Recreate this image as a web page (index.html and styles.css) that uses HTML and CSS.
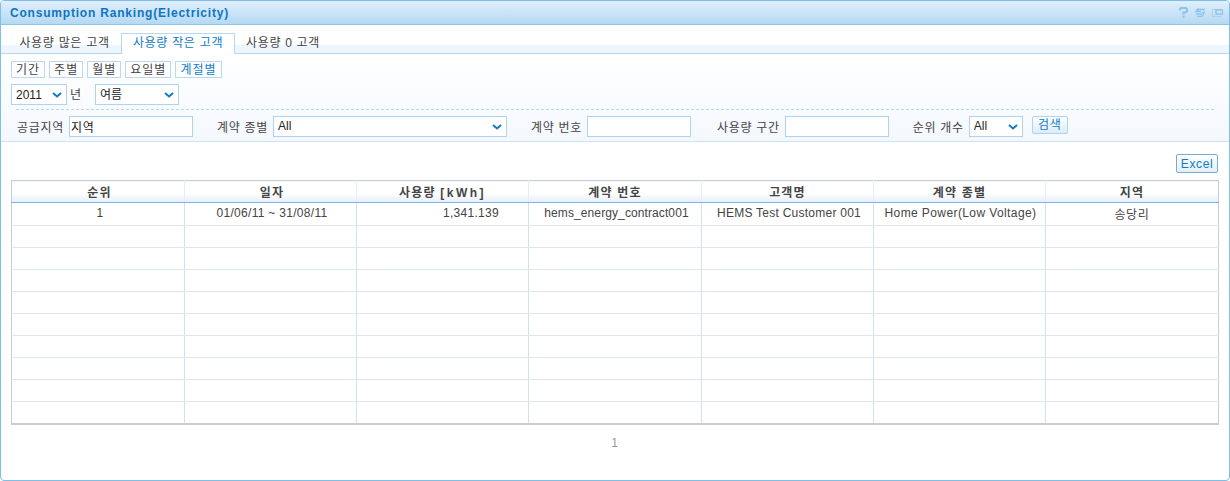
FILE: index.html
```html
<!DOCTYPE html>
<html lang="ko">
<head>
  <meta charset="UTF-8">
  <title>Consumption Ranking(Electricity)</title>
  <link rel="stylesheet" href="styles.css">
</head>
<body>
  <div class="panel">
    <div class="panel-head">
      <h1>Consumption Ranking(Electricity)</h1>
      <div class="head-icons">
        <svg width="9" height="11" viewBox="0 0 9 11"><path d="M1 3.500V1.500L2 1h5l1 1v2.500L6 5.500H4.500v2M4.500 8.500V11" fill="none" stroke="#8cc4ec" stroke-width="2"/></svg>
        <svg width="10" height="9" viewBox="0 0 10 9"><path d="M10 1.500H4L1 3.500h5M3.500 0L1 3M1 6h6M2 8.500h5L9 5.500M7 4.500h3" fill="none" stroke="#8cc4ec" stroke-width="1.300"/></svg>
        <svg width="11" height="8" viewBox="0 0 11 8"><rect x="4" y="1" width="6.500" height="4" fill="#cfe6f8" stroke="#8cc4ec" stroke-width="1.500"/><path d="M.5 .5h10M.5 .5v7M.5 7.500h10" fill="none" stroke="#8cc4ec" stroke-dasharray="1 1"/></svg>
      </div>
    </div>

    <div class="tabs">
      <a class="tab">사용량 많은 고객</a>
      <a class="tab active">사용량 작은 고객</a>
      <a class="tab">사용량 0 고객</a>
    </div>

    <div class="filters">
      <div class="periods">
        <button class="period">기간</button>
        <button class="period">주별</button>
        <button class="period">월별</button>
        <button class="period">요일별</button>
        <button class="period on">계절별</button>
      </div>
      <div class="date-row">
        <span class="sel sel-year">
          <select><option>2011</option></select>
          <svg class="arrow" width="10" height="6" viewBox="0 0 10 6"><path d="M1 1l4 3.500L9 1" fill="none" stroke="#0f7cc4" stroke-width="2"/></svg>
        </span>
        <span class="year-label">년</span>
        <span class="sel sel-season">
          <select><option>여름</option></select>
          <svg class="arrow" width="10" height="6" viewBox="0 0 10 6"><path d="M1 1l4 3.500L9 1" fill="none" stroke="#0f7cc4" stroke-width="2"/></svg>
        </span>
      </div>
      <div class="search-row">
        <label class="lbl-area">공급지역</label>
        <input class="txt txt-area" type="text" value="지역">
        <label class="lbl-type">계약 종별</label>
        <span class="sel sel-type">
          <select><option>All</option></select>
          <svg class="arrow" width="10" height="6" viewBox="0 0 10 6"><path d="M1 1l4 3.500L9 1" fill="none" stroke="#0f7cc4" stroke-width="2"/></svg>
        </span>
        <label class="lbl-no">계약 번호</label>
        <input class="txt txt-no" type="text">
        <label class="lbl-use">사용량 구간</label>
        <input class="txt txt-no" type="text">
        <label class="lbl-rank">순위 개수</label>
        <span class="sel sel-rank">
          <select><option>All</option></select>
          <svg class="arrow" width="10" height="6" viewBox="0 0 10 6"><path d="M1 1l4 3.500L9 1" fill="none" stroke="#0f7cc4" stroke-width="2"/></svg>
        </span>
        <button class="btn-search">검색</button>
      </div>
    </div>

    <div class="content">
      <div class="tools"><button class="btn-excel">Excel</button></div>
      <table class="grid">
        <thead>
          <tr><th>순위</th><th>일자</th><th>사용량 <span class="unit">[kWh]</span></th><th>계약 번호</th><th>고객명</th><th>계약 종별</th><th>지역</th></tr>
        </thead>
        <tbody>
          <tr><td class="rank">1</td><td class="date">01/06/11 ~ 31/08/11</td><td class="num">1,341.139</td><td class="contract">hems_energy_contract001</td><td class="customer">HEMS Test Customer 001</td><td class="kind">Home Power(Low Voltage)</td><td class="area">송당리</td></tr>
          <tr><td></td><td></td><td></td><td></td><td></td><td></td><td></td></tr>
          <tr><td></td><td></td><td></td><td></td><td></td><td></td><td></td></tr>
          <tr><td></td><td></td><td></td><td></td><td></td><td></td><td></td></tr>
          <tr><td></td><td></td><td></td><td></td><td></td><td></td><td></td></tr>
          <tr><td></td><td></td><td></td><td></td><td></td><td></td><td></td></tr>
          <tr><td></td><td></td><td></td><td></td><td></td><td></td><td></td></tr>
          <tr><td></td><td></td><td></td><td></td><td></td><td></td><td></td></tr>
          <tr><td></td><td></td><td></td><td></td><td></td><td></td><td></td></tr>
          <tr><td></td><td></td><td></td><td></td><td></td><td></td><td></td></tr>
        </tbody>
      </table>
      <div class="pager">1</div>
    </div>
  </div>
</body>
</html>
```

FILE: styles.css
```css
* { box-sizing: border-box; }
html, body { margin: 0; height: 100%; }
body {
  background: #fff;
  color: #444;
  font-family: "Liberation Sans", "Noto Sans CJK KR", sans-serif;
  font-size: 12px;
  letter-spacing: 0.7px;
  overflow: hidden;
}
button, input, select { font: inherit; letter-spacing: inherit; margin: 0; }

.panel {
  height: 481px;
  border: 1px solid #7cc0ea;
  border-radius: 4px;
  overflow: hidden;
}
.panel-head {
  height: 24px;
  padding: 0 6px 0 9px;
  display: flex;
  align-items: center;
  justify-content: space-between;
  background: linear-gradient(#e0effc, #b5d9f3);
  border-bottom: 1px solid #8cc4ec;
}
.panel-head h1 {
  margin: 0;
  font-size: 12px;
  font-weight: bold;
  letter-spacing: 0.8px;
  color: #0f74c4;
}
.head-icons { display: flex; align-items: center; gap: 7px; }

.tabs {
  height: 29px;
  padding: 8px 0 0 7px;
  display: flex;
  background: linear-gradient(#fff 20px, #edf5fe 20px);
  border-bottom: 1px solid #b9d7ef;
}
.tab {
  width: 113px;
  height: 20px;
  line-height: 20px;
  text-align: center;
  color: #444;
}
.tab:last-child { width: 96px; }
.tab.active {
  width: 114px;
  height: 21px;
  color: #0f7cc4;
  background: #fff;
  border: 1px solid #b9d7ef;
  border-bottom: 0;
  line-height: 19px;
}

.filters {
  height: 88px;
  padding: 7px 10px 0;
  background: linear-gradient(#fff, #f4f8fe);
  border-bottom: 1px solid #cde2f5;
}
.periods { display: flex; gap: 4px; }
.period {
  height: 17px;
  padding: 0 4px;
  background: #fff;
  border: 1px solid #bcd8f0;
  color: #444;
  line-height: 14px;
  letter-spacing: 1px;
}
.period.on { color: #0f7cc4; }

.date-row { display: flex; align-items: center; margin-top: 6px; height: 21px; }
.year-label { width: 28px; padding-left: 3px; margin-top: -3px; }

.sel { position: relative; display: inline-block; height: 21px; }
.sel select {
  width: 100%;
  height: 100%;
  padding: 0 0 0 4px;
  appearance: none;
  border: 1px solid #afd2ee;
  border-radius: 0;
  background: #fff;
  color: #222;
  letter-spacing: 0;
}
.sel .arrow { position: absolute; top: 8px; right: 5px; pointer-events: none; }
.sel-year { width: 56px; }
.sel-season { width: 84px; }
.sel-type { width: 234px; }
.sel-rank { width: 54px; }

.search-row {
  display: flex;
  align-items: center;
  height: 27px;
  margin: 4px 5px 0 5px;
  padding-top: 6px;
  border-top: 1px dashed #b5d8f2;
}
.search-row label { white-space: nowrap; }
.lbl-area { padding-left: 1px; }
.txt {
  height: 21px;
  padding: 0 1px;
  border: 1px solid #afd2ee;
  border-radius: 0;
  background: #fff;
  color: #222;
}
.txt-area { width: 124px; margin: 0 24px 0 5px; }
.lbl-type { margin-right: 5px; }
.lbl-no { margin: 0 5px 0 24px; }
.txt-no { width: 104px; }
.lbl-use { margin: 0 5px 0 26px; }
.lbl-rank { margin: 0 5px 0 24px; }
.btn-search {
  width: 36px;
  height: 18px;
  margin: -3px 0 0 9px;
  padding: 0;
  border: 1px solid #afd2ee;
  border-radius: 2px;
  background: linear-gradient(#fff, #dcecf9);
  color: #0f7cc4;
  line-height: 14px;
}

.content { padding: 12px 10px 0; }
.tools { display: flex; justify-content: flex-end; height: 26px; padding-right: 1px; }
.btn-excel {
  width: 42px;
  height: 19px;
  padding: 0;
  border: 1px solid #7fa9cc;
  border-radius: 2px;
  background: linear-gradient(#fff, #e2effa);
  color: #0f7cc4;
  letter-spacing: 0.6px;
}

.grid {
  width: 1208px;
  border-collapse: collapse;
  table-layout: fixed;
  border: 1px solid #ccc;
  border-bottom-width: 2px;
}
.grid th {
  height: 22px;
  padding: 0 0 1px;
  font-weight: bold;
  letter-spacing: 1.2px;
  color: #444;
  background: linear-gradient(#fff 55%, #e4effa);
  border-left: 1px solid #e4eef8;
  border-bottom: 1px solid #7fb3e0;
}
.grid th:nth-child(1) { width: 173px; padding-left: 3px; }
.grid th:nth-child(2) { width: 172px; padding-left: 3px; }
.grid th:nth-child(3) { width: 172px; }
.grid th:nth-child(4) { width: 173px; }
.grid th:nth-child(5) { width: 172px; }
.grid th:nth-child(6) { width: 172px; }
.grid .unit { letter-spacing: 2.5px; }
.grid td {
  height: 22px;
  padding: 0;
  text-align: center;
  color: #444;
  letter-spacing: 0.3px;
  border-left: 1px solid #cde2f5;
  border-bottom: 1px solid #dbe7f3;
  white-space: nowrap;
}
.grid tbody tr:first-child td { height: 23px; padding-bottom: 2px; }
.grid th:first-child, .grid td:first-child { border-left: 0; }
.grid td.rank { padding-left: 4px; }
.grid td.date { padding-left: 3px; }
.grid td.contract { letter-spacing: 0.1px; padding-left: 3px; }
.grid td.customer { letter-spacing: 0.25px; padding-left: 3px; }
.grid td.kind { letter-spacing: 0.4px; padding-left: 2px; }
.grid td.area { letter-spacing: 0.7px; }
.grid td.num { text-align: right; padding-right: 29px; }

.pager { margin-top: 11px; text-align: center; color: #999; height: 15px; }
```
